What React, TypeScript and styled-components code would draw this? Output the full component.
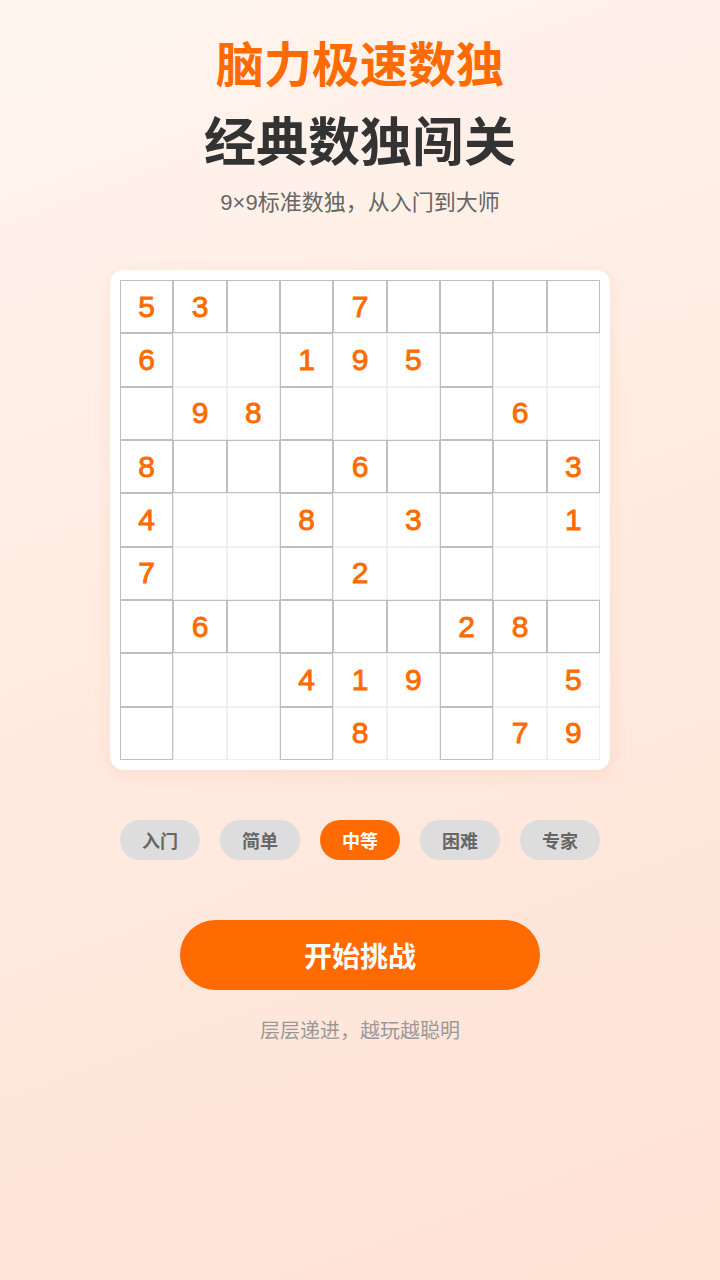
import React, { useState } from 'react';
import styled, { createGlobalStyle } from 'styled-components';

const GlobalStyle = createGlobalStyle`
  html, body {
    margin: 0;
    padding: 0;
  }
  body {
    font-family: "Liberation Sans", "Noto Sans CJK SC", sans-serif;
    background: #fff5ee;
  }
`;

const Page = styled.div`
  width: 720px;
  min-height: 1280px;
  box-sizing: border-box;
  padding-top: 38px;
  display: flex;
  flex-direction: column;
  align-items: center;
  background: linear-gradient(160deg, #fff5ee 0%, #ffe9df 55%, #ffe2d4 100%);
`;

const Title = styled.h1`
  margin: 0;
  font-size: 48px;
  line-height: 56px;
  font-weight: 700;
  color: #ff6b00;
`;

const SubTitle = styled.h2`
  margin: 19px 0 0;
  font-size: 52px;
  line-height: 60px;
  font-weight: 700;
  color: #333333;
`;

const Desc = styled.p`
  margin: 15px 0 0;
  font-size: 22px;
  line-height: 30px;
  color: #666666;
`;

const Board = styled.div`
  margin-top: 52px;
  width: 500px;
  height: 500px;
  box-sizing: border-box;
  padding: 10px;
  background: #ffffff;
  border-radius: 14px;
  box-shadow: 0 4px 18px rgba(230, 120, 60, 0.12);
`;

const Grid = styled.div`
  display: grid;
  grid-template-columns: repeat(9, 1fr);
  grid-template-rows: repeat(9, 1fr);
  width: 480px;
  height: 480px;
`;

const Cell = styled.div<{ $strong: boolean }>`
  display: flex;
  align-items: center;
  justify-content: center;
  box-sizing: border-box;
  border: ${(p) => (p.$strong ? '1.5px solid #bfbfbf' : '1px solid #efefef')};
  font-size: 30px;
  font-weight: 400;
  color: #ff6b00;
  -webkit-text-stroke: 0.9px #ff6b00;
`;

const Levels = styled.div`
  margin-top: 50px;
  display: flex;
  gap: 20px;
`;

const LevelButton = styled.button<{ $active: boolean }>`
  width: 80px;
  height: 40px;
  border: none;
  border-radius: 20px;
  padding: 0;
  font-family: inherit;
  font-size: 18px;
  font-weight: 700;
  cursor: pointer;
  background: ${(p) => (p.$active ? '#ff6b00' : '#dddddd')};
  color: ${(p) => (p.$active ? '#ffffff' : '#666666')};
`;

const StartButton = styled.button`
  margin-top: 60px;
  width: 360px;
  height: 70px;
  border: none;
  border-radius: 35px;
  background: #ff6b00;
  color: #ffffff;
  font-family: inherit;
  font-size: 28px;
  font-weight: 700;
  cursor: pointer;
`;

const Footer = styled.p`
  margin: 27px 0 0;
  font-size: 20px;
  line-height: 28px;
  color: #999999;
`;

const puzzle = [
  '53..7....',
  '6..195...',
  '.98....6.',
  '8...6...3',
  '4..8.3..1',
  '7...2....',
  '.6....28.',
  '...419..5',
  '....8..79',
];

const levels = ['入门', '简单', '中等', '困难', '专家'];

function App() {
  const [level, setLevel] = useState<number>(2);

  return (
    <>
      <GlobalStyle />
      <Page>
        <Title>脑力极速数独</Title>
        <SubTitle>经典数独闯关</SubTitle>
        <Desc>9×9标准数独，从入门到大师</Desc>
        <Board>
          <Grid>
            {puzzle.map((row, r) =>
              row.split('').map((ch, c) => (
                <Cell key={`${r}-${c}`} $strong={r % 3 === 0 || c % 3 === 0}>
                  {ch === '.' ? '' : ch}
                </Cell>
              )),
            )}
          </Grid>
        </Board>
        <Levels>
          {levels.map((name, i) => (
            <LevelButton key={name} $active={i === level} onClick={() => setLevel(i)}>
              {name}
            </LevelButton>
          ))}
        </Levels>
        <StartButton>开始挑战</StartButton>
        <Footer>层层递进，越玩越聪明</Footer>
      </Page>
    </>
  );
}

export default App;
